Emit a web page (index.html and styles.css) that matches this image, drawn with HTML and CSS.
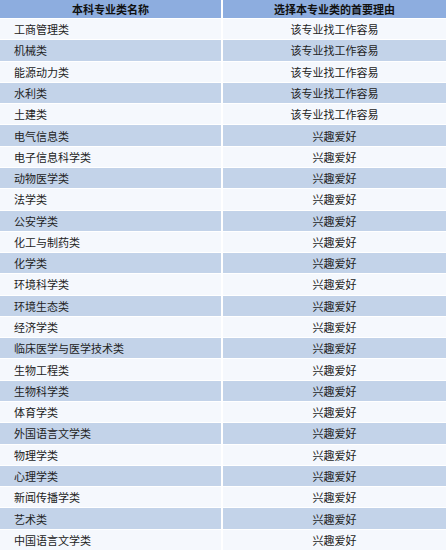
FILE: index.html
```html
<!DOCTYPE html>
<html lang="zh">
<head>
<meta charset="utf-8">
<link rel="stylesheet" href="styles.css">
</head>
<body>
<div class="table">
  <div class="cell head">本科专业类名称</div><div class="cell head">选择本专业类的首要理由</div>
  <div class="cell name odd">工商管理类</div><div class="cell reason odd">该专业找工作容易</div>
  <div class="cell name even">机械类</div><div class="cell reason even">该专业找工作容易</div>
  <div class="cell name odd">能源动力类</div><div class="cell reason odd">该专业找工作容易</div>
  <div class="cell name even">水利类</div><div class="cell reason even">该专业找工作容易</div>
  <div class="cell name odd">土建类</div><div class="cell reason odd">该专业找工作容易</div>
  <div class="cell name even">电气信息类</div><div class="cell reason even">兴趣爱好</div>
  <div class="cell name odd">电子信息科学类</div><div class="cell reason odd">兴趣爱好</div>
  <div class="cell name even">动物医学类</div><div class="cell reason even">兴趣爱好</div>
  <div class="cell name odd">法学类</div><div class="cell reason odd">兴趣爱好</div>
  <div class="cell name even">公安学类</div><div class="cell reason even">兴趣爱好</div>
  <div class="cell name odd">化工与制药类</div><div class="cell reason odd">兴趣爱好</div>
  <div class="cell name even">化学类</div><div class="cell reason even">兴趣爱好</div>
  <div class="cell name odd">环境科学类</div><div class="cell reason odd">兴趣爱好</div>
  <div class="cell name even">环境生态类</div><div class="cell reason even">兴趣爱好</div>
  <div class="cell name odd">经济学类</div><div class="cell reason odd">兴趣爱好</div>
  <div class="cell name even">临床医学与医学技术类</div><div class="cell reason even">兴趣爱好</div>
  <div class="cell name odd">生物工程类</div><div class="cell reason odd">兴趣爱好</div>
  <div class="cell name even">生物科学类</div><div class="cell reason even">兴趣爱好</div>
  <div class="cell name odd">体育学类</div><div class="cell reason odd">兴趣爱好</div>
  <div class="cell name even">外国语言文学类</div><div class="cell reason even">兴趣爱好</div>
  <div class="cell name odd">物理学类</div><div class="cell reason odd">兴趣爱好</div>
  <div class="cell name even">心理学类</div><div class="cell reason even">兴趣爱好</div>
  <div class="cell name odd">新闻传播学类</div><div class="cell reason odd">兴趣爱好</div>
  <div class="cell name even">艺术类</div><div class="cell reason even">兴趣爱好</div>
  <div class="cell name odd">中国语言文学类</div><div class="cell reason odd">兴趣爱好</div>
</div>
</body>
</html>
```

FILE: styles.css
```css
html, body {
  margin: 0;
  padding: 0;
  background: #ffffff;
}
.table {
  width: 446px;
  height: 550px;
  display: grid;
  grid-template-columns: 221px 1fr;
  grid-template-rows: 18px repeat(25, 1fr);
  column-gap: 2px;
  row-gap: 1px;
  font-family: "Noto Sans CJK SC", "Noto Sans", sans-serif;
  font-size: 11px;
  color: #222222;
}
.cell {
  display: flex;
  align-items: center;
  white-space: nowrap;
}
.head {
  background: #8daddf;
  justify-content: center;
  font-weight: bold;
  color: #111111;
}
.name {
  padding-left: 14px;
}
.reason {
  justify-content: center;
}
.odd {
  background: #f5f8fd;
}
.even {
  background: #c3d3e9;
}
```
